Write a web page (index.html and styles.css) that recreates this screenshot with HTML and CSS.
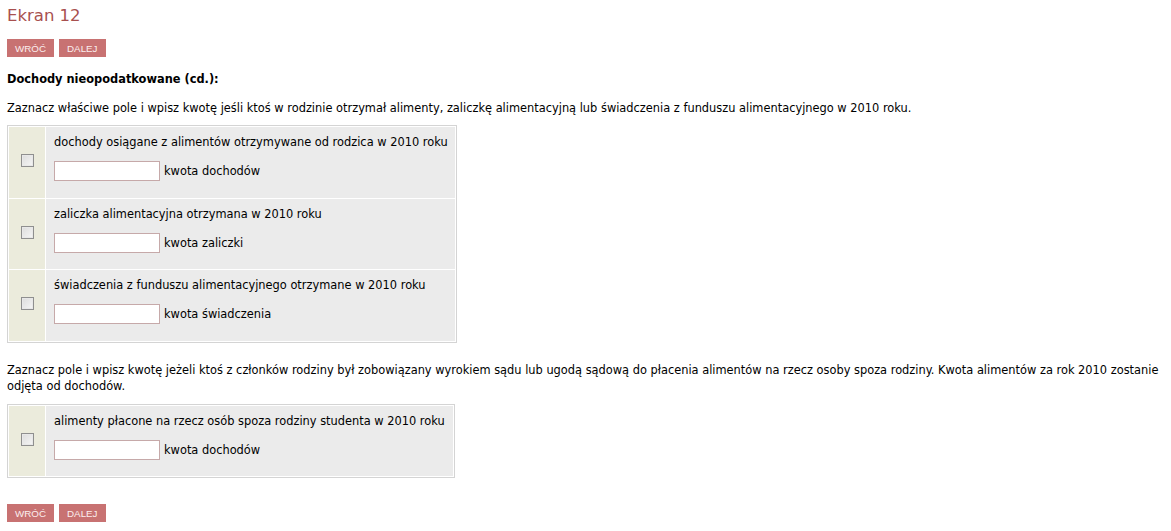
FILE: index.html
```html
<!DOCTYPE html>
<html lang="pl">
<head>
<meta charset="utf-8">
<title>Ekran 12</title>
<link rel="stylesheet" href="styles.css">
</head>
<body>
<div class="page">
  <h1 class="title">Ekran 12</h1>
  <div class="nav">
    <button class="btn">WRÓĆ</button>
    <button class="btn">DALEJ</button>
  </div>
  <h2 class="section">Dochody nieopodatkowane (cd.):</h2>
  <p class="intro">Zaznacz właściwe pole i wpisz kwotę jeśli ktoś w rodzinie otrzymał alimenty, zaliczkę alimentacyjną lub świadczenia z funduszu alimentacyjnego w 2010 roku.</p>
  <table class="opts opts-1">
    <tr>
      <td class="chk"><span class="box"></span></td>
      <td class="body">
        <div class="label">dochody osiągane z alimentów otrzymywane od rodzica w 2010 roku</div>
        <div class="field"><input class="amount" type="text"> kwota dochodów</div>
      </td>
    </tr>
    <tr>
      <td class="chk"><span class="box"></span></td>
      <td class="body">
        <div class="label">zaliczka alimentacyjna otrzymana w 2010 roku</div>
        <div class="field"><input class="amount" type="text"> kwota zaliczki</div>
      </td>
    </tr>
    <tr>
      <td class="chk"><span class="box"></span></td>
      <td class="body">
        <div class="label">świadczenia z funduszu alimentacyjnego otrzymane w 2010 roku</div>
        <div class="field"><input class="amount" type="text"> kwota świadczenia</div>
      </td>
    </tr>
  </table>
  <p class="intro intro-2">Zaznacz pole i wpisz kwotę jeżeli ktoś z członków rodziny był zobowiązany wyrokiem sądu lub ugodą sądową do płacenia alimentów na rzecz osoby spoza rodziny. Kwota alimentów za rok 2010 zostanie odjęta od dochodów.</p>
  <table class="opts opts-2">
    <tr>
      <td class="chk"><span class="box"></span></td>
      <td class="body">
        <div class="label">alimenty płacone na rzecz osób spoza rodziny studenta w 2010 roku</div>
        <div class="field"><input class="amount" type="text"> kwota dochodów</div>
      </td>
    </tr>
  </table>
  <div class="nav nav-bottom">
    <button class="btn">WRÓĆ</button>
    <button class="btn">DALEJ</button>
  </div>
</div>
</body>
</html>
```
FILE: styles.css
```css
html, body {
  margin: 0;
  padding: 0;
  background: #ffffff;
}
body {
  font-family: "DejaVu Sans", Verdana, sans-serif;
  font-size: 11.4px;
  color: #000;
}
.page {
  padding: 4px 7px 0 7px;
}
.title {
  margin: 0;
  font-family: "DejaVu Sans", sans-serif;
  font-weight: normal;
  font-size: 16.5px;
  line-height: 24px;
  color: #a8504f;
}
.nav {
  display: flex;
  gap: 5px;
  margin-top: 11px;
}
.btn {
  border: 0;
  margin: 0;
  padding: 0 8px;
  height: 18px;
  background: #c87272;
  color: #fbeeee;
  font-family: "Liberation Sans", Arial, sans-serif;
  font-size: 9.8px;
  letter-spacing: 0;
}
.section {
  margin: 14px 0 0 0;
  font-size: 11.4px;
  font-weight: bold;
  line-height: 16px;
}
.intro {
  margin: 13px 0 0 0;
  line-height: 16px;
}
.opts {
  border-collapse: separate;
  border-spacing: 1px;
  border: 1px solid #d4d4d4;
  margin-top: 9px;
}
.opts-1 { width: 450px; }
.opts-2 { width: 448px; margin-top: 10px; }
.opts td {
  padding: 0;
}
.chk {
  width: 36px;
  background: #ebebdc;
  text-align: center;
  vertical-align: middle;
}
.box {
  display: inline-block;
  width: 11px;
  height: 11px;
  border: 1px solid #8f8f8f;
  background: linear-gradient(135deg, #dcdcdc, #f6f6f6);
  box-shadow: inset 0 0 0 1px #e8e8e8;
  vertical-align: middle;
  margin-top: -4px;
}
.body {
  background: #ebebeb;
  padding: 7px 6px 16.6px 8px !important;
}
.label {
  line-height: 16px;
  white-space: nowrap;
}
.field {
  margin-top: 11px;
  display: flex;
  align-items: center;
  gap: 4px;
}
.amount {
  box-sizing: border-box;
  width: 106px;
  height: 20px;
  margin: 0;
  border: 1px solid #c6a9a9;
  background: #fff;
}
.intro-2 {
  margin-top: 19px;
  width: 1162px;
}
.nav-bottom {
  margin-top: 26px;
}
```
